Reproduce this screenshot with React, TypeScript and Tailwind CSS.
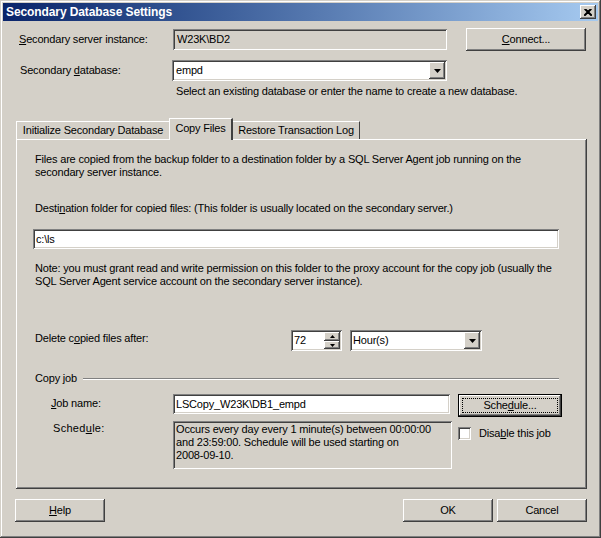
const raised =
  "bg-[#d4d0c8] shadow-[inset_-1px_-1px_#404040,inset_1px_1px_#ffffff,inset_-2px_-2px_#808080,inset_2px_2px_#d4d0c8]";
const sunken =
  "shadow-[inset_1px_1px_#808080,inset_-1px_-1px_#ffffff,inset_2px_2px_#404040,inset_-2px_-2px_#d4d0c8]";

const Acc = ({ c }: { c: string }) => <span className="underline underline-offset-[1px]">{c}</span>;

const Arrow = () => (
  <svg width="7" height="4" viewBox="0 0 7 4">
    <polygon points="0,0 7,0 3.5,4" fill="#000" />
  </svg>
);

const ComboButton = () => (
  <div className={`${raised} w-[16px] h-[17px] flex items-center justify-center`}>
    <Arrow />
  </div>
);

const Button = ({ className, children }: { className?: string; children: React.ReactNode }) => (
  <div className={`${raised} flex items-center justify-center ${className ?? ""}`}>{children}</div>
);

export default function App() {
  return (
    <div className="w-[601px] h-[538px] bg-[#d4d0c8] text-[11px] leading-[13px] tracking-[-0.18px] text-black font-['Liberation_Sans',Arial,sans-serif] flex flex-col p-[3px] shadow-[inset_-1px_-1px_#404040,inset_1px_1px_#d4d0c8,inset_-2px_-2px_#808080,inset_2px_2px_#ffffff] select-none">
      {/* title bar */}
      <div className="h-[18px] flex items-center justify-between bg-linear-to-r from-[#0a246a] to-[#a6caf0] pl-[3px] pr-[2px]">
        <span className="text-white font-bold text-[12px] tracking-[-0.1px]">Secondary Database Settings</span>
        <div className={`${raised} w-[16px] h-[14px] flex items-center justify-center`}>
          <svg width="8" height="7" viewBox="0 0 8 7">
            <path d="M0.5 0 L7.5 7 M7.5 0 L0.5 7 M1.5 0 L8 6.5 M6.5 0 L0 6.5" stroke="#000" strokeWidth="1.3" />
          </svg>
        </div>
      </div>

      {/* server instance */}
      <div className="mt-[7px] h-[23px] flex items-center">
        <div className="pl-[16px] w-[170px]">
          <Acc c="S" />econdary server instance:
        </div>
        <div className={`${sunken} w-[274px] h-[21px] flex items-center pl-[4px]`}>W23K\BD2</div>
        <Button className="ml-[19px] w-[120px] h-[23px]">
          <span>
            <Acc c="C" />onnect...
          </span>
        </Button>
      </div>

      {/* secondary database */}
      <div className="mt-[9px] h-[21px] flex items-center">
        <div className="pl-[17px] w-[169px]">
          Secondary <Acc c="d" />atabase:
        </div>
        <div className={`${sunken} bg-white w-[275px] h-[21px] flex items-center justify-between pl-[4px] pr-[2px]`}>
          <span>empd</span>
          <ComboButton />
        </div>
      </div>
      <div className="mt-[4px] pl-[173px]">
        Select an existing database or enter the name to create a new database.
      </div>

      {/* tabs */}
      <div className="mt-[20px] ml-[13px] h-[21px] flex items-end relative z-10">
        <div className="w-[153px] h-[18px] border-t border-l border-white flex items-center justify-center">
          Initialize Secondary Database
        </div>
        <div className="w-[64px] h-[22px] -mb-px bg-[#d4d0c8] border-t border-l border-white border-r-2 border-r-[#404040] flex items-start justify-center pt-[3px]">
          Copy Files
        </div>
        <div className="w-[127px] h-[18px] border-t border-r border-white border-r-[#404040] flex items-center justify-center">
          Restore Transaction Log
        </div>
      </div>

      {/* panel */}
      <div className="ml-[13px] w-[571px] h-[350px] flex flex-col pl-[19px] shadow-[inset_-1px_-1px_#404040,inset_1px_1px_#ffffff,inset_-2px_-2px_#808080]">
        <div className="mt-[14px]">
          Files are copied from the backup folder to a destination folder by a SQL Server Agent job running on the
          <br />
          secondary server instance.
        </div>
        <div className="mt-[23px]">
          Desti<Acc c="n" />ation folder for copied files: (This folder is usually located on the secondary server.)
        </div>
        <div className={`${sunken} bg-white mt-[14px] -ml-[2px] w-[526px] h-[20px] flex items-center pl-[3px]`}>c:\ls</div>
        <div className="mt-[13px]">
          Note: you must grant read and write permission on this folder to the proxy account for the copy job (usually the
          <br />
          SQL Server Agent service account on the secondary server instance).
        </div>

        <div className="mt-[42px] h-[21px] flex items-center">
          <div className="w-[256px] -mt-[4px]">
            Delete c<Acc c="o" />pied files after:
          </div>
          <div className={`${sunken} bg-white w-[51px] h-[21px] flex items-center justify-between pl-[3px] pr-[2px]`}>
            <span>72</span>
            <div className="flex flex-col">
              <div className={`${raised} w-[16px] h-[9px] flex items-center justify-center`}>
                <svg width="5" height="3" viewBox="0 0 5 3">
                  <polygon points="2.5,0 5,3 0,3" fill="#000" />
                </svg>
              </div>
              <div className={`${raised} w-[16px] h-[8px] flex items-center justify-center`}>
                <svg width="5" height="3" viewBox="0 0 5 3">
                  <polygon points="0,0 5,0 2.5,3" fill="#000" />
                </svg>
              </div>
            </div>
          </div>
          <div className={`${sunken} bg-white ml-[8px] w-[132px] h-[21px] flex items-center justify-between pl-[3px] pr-[2px]`}>
            <span>Hour(s)</span>
            <ComboButton />
          </div>
        </div>

        <div className="mt-[21px] flex items-center">
          <span>Copy job</span>
          <div className="ml-[6px] w-[476px] border-t border-t-[#808080] border-b border-b-white" />
        </div>

        <div className="mt-[9px] flex items-start">
          <div className="pl-[16px] w-[138px] mt-[3px]">
            <Acc c="J" />ob name:
          </div>
          <div className={`${sunken} bg-white w-[277px] h-[20px] flex items-center pl-[3px]`}>LSCopy_W23K\DB1_empd</div>
          <div className="ml-[8px] w-[104px] h-[23px] border border-black">
            <div className={`${raised} w-full h-full p-[3px]`}>
              <div className="w-full h-full border border-dotted border-black flex items-center justify-center">
                <span>
                  Sche<Acc c="d" />ule...
                </span>
              </div>
            </div>
          </div>
        </div>

        <div className="mt-[4px] flex items-start">
          <div className="pl-[18px] w-[138px] mt-[1px] tracking-[0.3px]">
            Sched<Acc c="u" />le:
          </div>
          <div className={`${sunken} w-[279px] h-[48px] pl-[3px] pt-[2px]`}>
            Occurs every day every 1 minute(s) between 00:00:00
            <br />
            and 23:59:00. Schedule will be used starting on
            <br />
            2008-09-10.
          </div>
          <div className="ml-[6px] mt-[6px] flex items-center">
            <div className={`${sunken} bg-white w-[13px] h-[13px]`} />
            <span className="ml-[8px]">
              Disa<Acc c="b" />le this job
            </span>
          </div>
        </div>
      </div>

      {/* bottom buttons */}
      <div className="mt-[10px] flex">
        <Button className="ml-[12px] w-[90px] h-[23px]">
          <span>
            <Acc c="H" />elp
          </span>
        </Button>
        <Button className="ml-[298px] w-[90px] h-[23px]">OK</Button>
        <Button className="ml-[4px] w-[90px] h-[23px]">Cancel</Button>
      </div>
    </div>
  );
}
